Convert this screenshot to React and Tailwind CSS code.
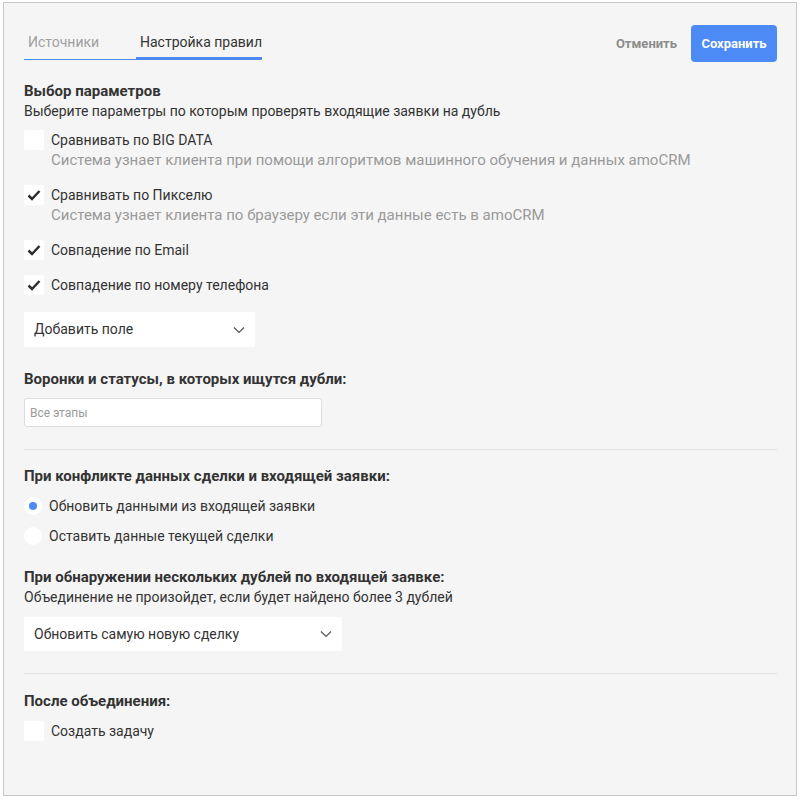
import React, { useState } from 'react';

const font = { fontFamily: 'Roboto, "Noto Sans", sans-serif' };

function Check({ checked, onClick }) {
  return (
    <button onClick={onClick} className="w-[20px] h-[20px] bg-white rounded-[2px] flex items-center justify-center shrink-0">
      {checked && (
        <svg width="14" height="12" viewBox="0 0 14 12">
          <path d="M1.5 6.5 L5 10 L12.5 2" fill="none" stroke="#2e2e2e" strokeWidth="2.5" />
        </svg>
      )}
    </button>
  );
}

function CheckRow({ label, desc, checked, onClick }) {
  return (
    <div className="flex items-start gap-[7px]">
      <Check checked={checked} onClick={onClick} />
      <div className="flex flex-col">
        <span className="text-[14px] leading-[20px] text-[#333]">{label}</span>
        {desc && <span className="text-[15px] leading-[20px] text-[#9a9a9a]">{desc}</span>}
      </div>
    </div>
  );
}

function Chevron() {
  return (
    <svg width="12" height="8" viewBox="0 0 12 8">
      <path d="M1 1.5 L6 6.5 L11 1.5" fill="none" stroke="#555" strokeWidth="1.2" />
    </svg>
  );
}

function Radio({ label, checked, onClick }) {
  return (
    <div className="flex items-center gap-[7px] cursor-pointer" onClick={onClick}>
      <div className="w-[18px] h-[18px] rounded-full bg-white flex items-center justify-center">
        {checked && <div className="w-[8px] h-[8px] rounded-full bg-[#4c8bf5]" />}
      </div>
      <span className="text-[14px] leading-[20px] text-[#333]">{label}</span>
    </div>
  );
}

export default function App() {
  const [checks, setChecks] = useState({ big: false, pixel: true, email: true, phone: true, task: false });
  const [radio, setRadio] = useState(0);
  const toggle = (k) => setChecks({ ...checks, [k]: !checks[k] });

  return (
    <div className="min-h-[800px] bg-white pt-[2px] pl-[3px]" style={font}>
      <div className="w-[794px] h-[794px] bg-[#f5f5f5] border border-[#c8c8c8] pl-[20px] pr-[19px]">
        <div className="flex items-start justify-between pt-[22px]">
          <div className="flex mt-[7px] whitespace-nowrap">
            <div className="w-[112px] pl-[4px] pb-[7px] border-b border-[#4c8bf5] text-[14px] leading-[20px] text-[#a0a0a0]">Источники</div>
            <div className="w-[126px] pl-[4px] pb-[5px] border-b-[3px] border-[#4c8bf5] text-[14px] leading-[20px] text-[#333]">Настройка правил</div>
          </div>
          <div className="flex items-center gap-[14px]">
            <button className="text-[13px] font-bold text-[#8c8c8c]">Отменить</button>
            <button className="w-[86px] h-[37px] bg-[#4c8bf5] rounded-[4px] text-white text-[13px] font-bold">Сохранить</button>
          </div>
        </div>

        <div className="mt-[19px] text-[15px] leading-[20px] font-bold text-[#333]">Выбор параметров</div>
        <div className="text-[14px] leading-[20px] text-[#333]">Выберите параметры по которым проверять входящие заявки на дубль</div>

        <div className="mt-[9px] flex flex-col gap-[15px]">
          <CheckRow label="Сравнивать по BIG DATA" desc="Система узнает клиента при помощи алгоритмов машинного обучения и данных amoCRM" checked={checks.big} onClick={() => toggle('big')} />
          <CheckRow label="Сравнивать по Пикселю" desc="Система узнает клиента по браузеру если эти данные есть в amoCRM" checked={checks.pixel} onClick={() => toggle('pixel')} />
          <CheckRow label="Совпадение по Email" checked={checks.email} onClick={() => toggle('email')} />
          <CheckRow label="Совпадение по номеру телефона" checked={checks.phone} onClick={() => toggle('phone')} />
        </div>

        <div className="mt-[17px] w-[231px] h-[35px] bg-white rounded-[2px] flex items-center justify-between pl-[10px] pr-[10px]">
          <span className="text-[14px] text-[#333]">Добавить поле</span>
          <Chevron />
        </div>

        <div className="mt-[22px] text-[15px] leading-[20px] font-bold text-[#333]">Воронки и статусы, в которых ищутся дубли:</div>
        <div className="mt-[9px] w-[298px] h-[29px] bg-white border border-[#dcdcdc] rounded-[3px] flex items-center pl-[5px]">
          <span className="text-[12px] text-[#9a9a9a]">Все этапы</span>
        </div>

        <div className="mt-[22px] border-t border-[#e2e2e2]" />

        <div className="mt-[16px] text-[15px] leading-[20px] font-bold text-[#333]">При конфликте данных сделки и входящей заявки:</div>
        <div className="mt-[10px] flex flex-col gap-[10px]">
          <Radio label="Обновить данными из входящей заявки" checked={radio === 0} onClick={() => setRadio(0)} />
          <Radio label="Оставить данные текущей сделки" checked={radio === 1} onClick={() => setRadio(1)} />
        </div>

        <div className="mt-[21px] text-[15px] leading-[20px] font-bold text-[#333]">При обнаружении нескольких дублей по входящей заявке:</div>
        <div className="text-[14px] leading-[20px] text-[#333]">Объединение не произойдет, если будет найдено более 3 дублей</div>

        <div className="mt-[10px] w-[318px] h-[34px] bg-white rounded-[2px] flex items-center justify-between pl-[10px] pr-[10px]">
          <span className="text-[14px] text-[#333]">Обновить самую новую сделку</span>
          <Chevron />
        </div>

        <div className="mt-[22px] border-t border-[#e2e2e2]" />

        <div className="mt-[17px] text-[15px] leading-[20px] font-bold text-[#333]">После объединения:</div>
        <div className="mt-[10px]">
          <CheckRow label="Создать задачу" checked={checks.task} onClick={() => toggle('task')} />
        </div>
      </div>
    </div>
  );
}
